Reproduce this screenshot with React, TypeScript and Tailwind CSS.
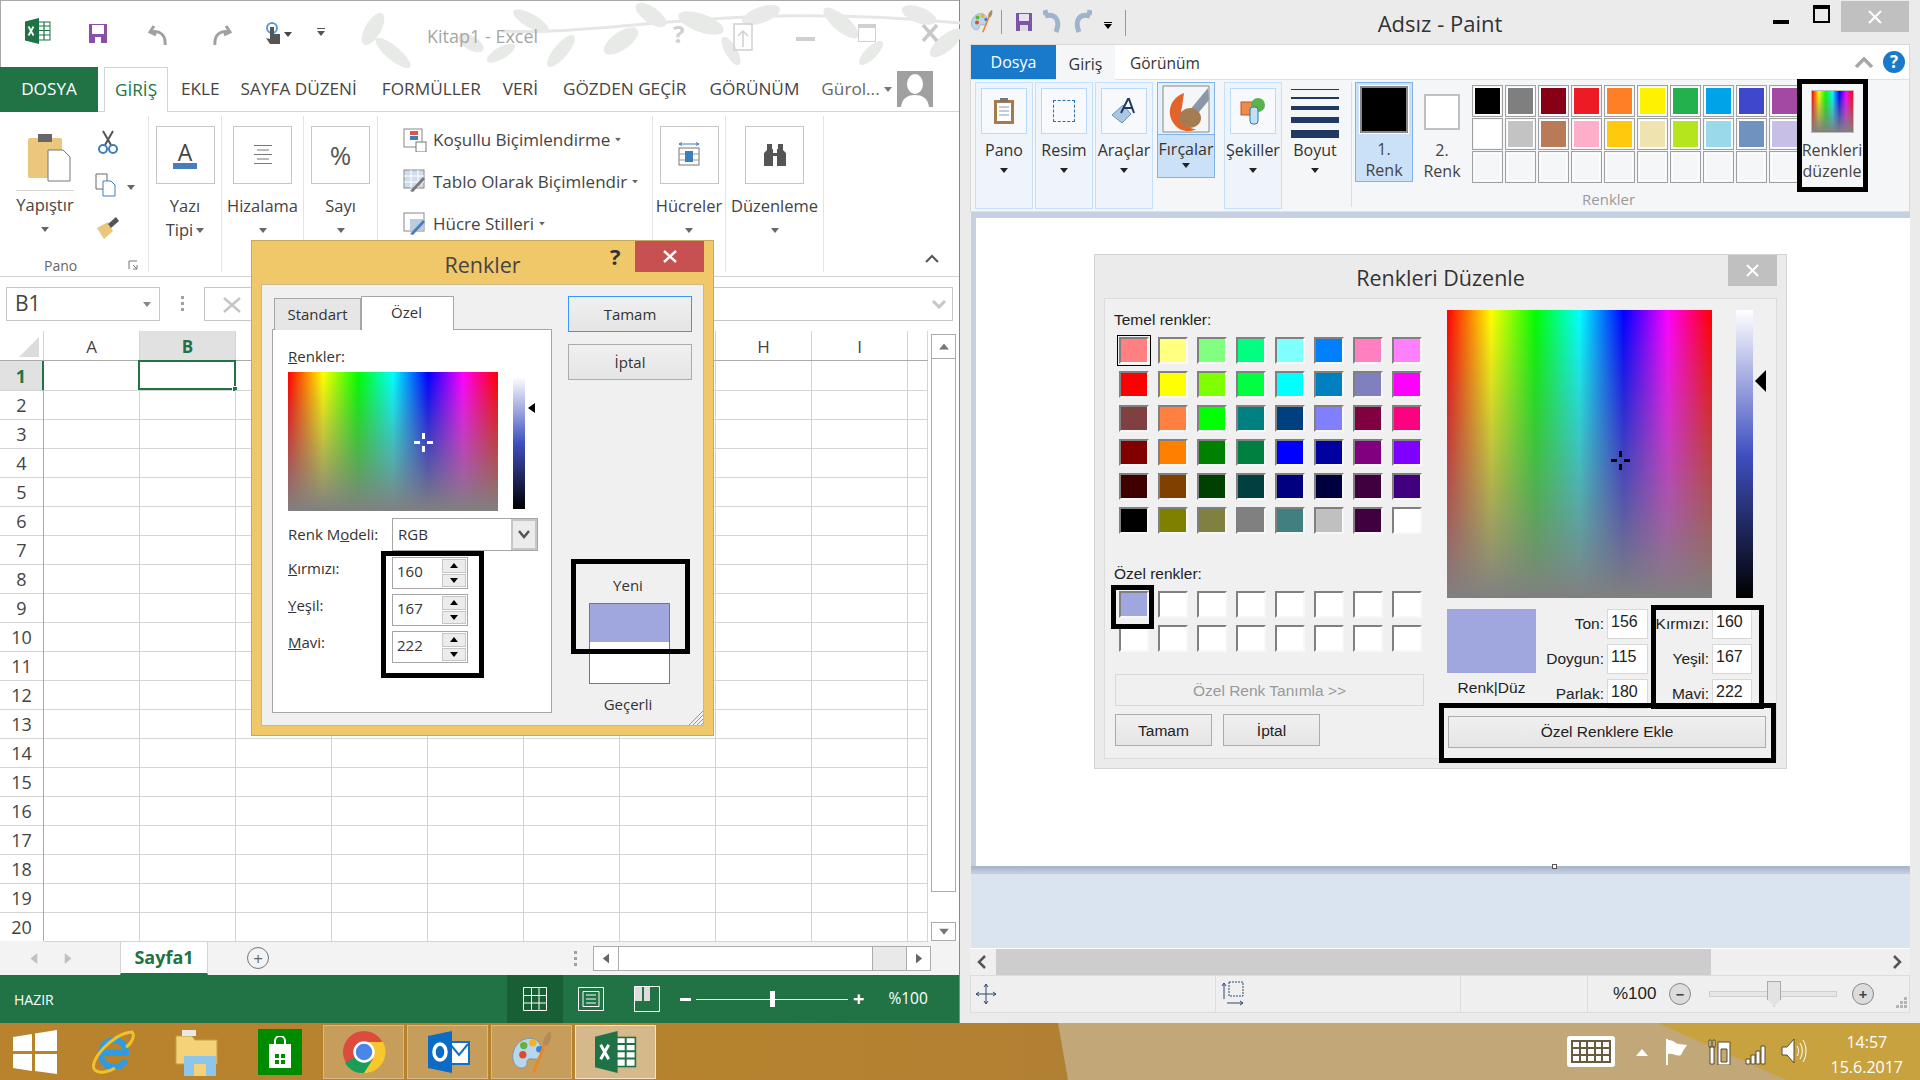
import type { ReactNode } from 'react'

const rows = Array.from({ length: 20 }, (_, i) => i + 1)
const columns = ['A', 'B', 'C', 'D', 'E', 'F', 'G', 'H', 'I', '']

const paletteRows = [
  ['#000000', '#7f7f7f', '#880015', '#ed1c24', '#ff7f27', '#fff200', '#22b14c', '#00a2e8', '#3f48cc', '#a349a4'],
  ['#ffffff', '#c3c3c3', '#b97a57', '#ffaec9', '#ffc90e', '#efe4b0', '#b5e61d', '#99d9ea', '#7092be', '#c8bfe7'],
  ['#f5f6f7', '#f5f6f7', '#f5f6f7', '#f5f6f7', '#f5f6f7', '#f5f6f7', '#f5f6f7', '#f5f6f7', '#f5f6f7', '#f5f6f7'],
]

const basicColors = [
  '#ff8080', '#ffff80', '#80ff80', '#00ff80', '#80ffff', '#0080ff', '#ff80c0', '#ff80ff',
  '#ff0000', '#ffff00', '#80ff00', '#00ff40', '#00ffff', '#0080c0', '#8080c0', '#ff00ff',
  '#804040', '#ff8040', '#00ff00', '#008080', '#004080', '#8080ff', '#800040', '#ff0080',
  '#800000', '#ff8000', '#008000', '#008040', '#0000ff', '#0000a0', '#800080', '#8000ff',
  '#400000', '#804000', '#004000', '#004040', '#000080', '#000040', '#400040', '#400080',
  '#000000', '#808000', '#808040', '#808080', '#408080', '#c0c0c0', '#400040', '#ffffff',
]

const customColors = ['#a0a7de', ...Array.from({ length: 15 }, () => '#ffffff')]

function Caret({ className = '' }: { className?: string }) {
  return (
    <svg width="8" height="5" viewBox="0 0 8 5" className={className}>
      <polygon points="0,0 8,0 4,5" fill="currentColor" />
    </svg>
  )
}

function ExcelIcon({ size = 26 }: { size?: number }) {
  return (
    <svg width={size} height={size} viewBox="0 0 26 26">
      <rect x="9" y="4" width="16" height="18" fill="#fff" stroke="#1f7246" />
      <path d="M13 4v18M19 4v18M9 8h16M9 12.5h16M9 17h16" stroke="#1f7246" strokeWidth="1.2" />
      <polygon points="0,3.500 14,0 14,26 0,22.500" fill="#1f7246" />
      <path d="M3.500 8.500l5 9M8.500 8.500l-5 9" stroke="#fff" strokeWidth="1.800" />
    </svg>
  )
}

function PaintPalette({ size = 24 }: { size?: number }) {
  return (
    <svg width={size} height={size} viewBox="0 0 48 48">
      <path d="M22 9C10 9 2 20 3 31c1 9 9 13 14 9 3-3 0-6 3-8s8 2 12-2c6-7 1-21-10-21z" fill="#b9d6ea" stroke="#6d94b0" />
      <circle cx="14" cy="27" r="4" fill="#e0492f" />
      <circle cx="15" cy="17" r="4" fill="#63b23c" />
      <circle cx="25" cy="14" r="4" fill="#f2b31f" />
      <circle cx="32" cy="21" r="3.500" fill="#3d83cf" />
      <path d="M24 46 37 14l3 1-13 32z" fill="#e8892a" />
      <path d="M36 15c0-5 3-11 8-13 2 5 0 12-4 15z" fill="#b48a5a" />
    </svg>
  )
}

function TitleLeaves() {
  const leaves = [
    [372, 28, 18, 8, -60], [392, 52, 22, 7, 40], [470, 42, 14, 7, 30], [500, 52, 16, 6, -30], [530, 20, 20, 7, 30],
    [560, 50, 20, 7, -50], [620, 40, 20, 9, -35], [650, 14, 18, 8, 35], [700, 22, 24, 9, 20], [730, 50, 16, 6, 60],
    [760, 14, 20, 8, -20], [840, 22, 22, 8, 40], [870, 52, 16, 6, -45], [918, 14, 18, 8, 20], [945, 42, 20, 8, -40],
  ]
  return (
    <svg width="960" height="67" className="absolute left-0 top-0">
      <path d="M500 30C620 35 720 0 960 22" fill="none" stroke="#e5e7e5" strokeWidth="3" />
      {leaves.map(([x, y, rx, ry, a], i) => (
        <ellipse key={i} cx={x} cy={y} rx={rx} ry={ry} transform={`rotate(${a} ${x} ${y})`} fill="#e8eae8" />
      ))}
    </svg>
  )
}

function ExcelTitleBar() {
  return (
    <div className="relative h-[67px] border-t border-l border-[#a8a8a8] text-[#9c9c9c]">
      <TitleLeaves />
      <div className="relative flex h-full items-start pt-[17px]">
        <div className="ml-[24px]"><ExcelIcon /></div>
        <svg width="22" height="22" viewBox="0 0 22 22" className="ml-[36px] mt-[4px]">
          <path d="M2 2h18v19H2z" fill="#8a4fa8" />
          <path d="M5 3h12v9H5z" fill="#fff" />
          <path d="M8 15h6v6H8z" fill="#fff" />
        </svg>
        <svg width="22" height="26" viewBox="0 0 22 26" className="ml-[39px] mt-[5px]" fill="none" stroke="#a0a0a0" strokeWidth="3">
          <path d="M6 3 2 9l6 3M3 9c9-2 15 3 14 13" />
        </svg>
        <svg width="22" height="26" viewBox="0 0 22 26" className="ml-[40px] mt-[5px]" fill="none" stroke="#a0a0a0" strokeWidth="3">
          <path d="M16 3l4 6-6 3M19 9C10 7 4 12 5 22" />
        </svg>
        <svg width="18" height="24" viewBox="0 0 18 24" className="ml-[32px] mt-[4px]">
          <circle cx="8" cy="6" r="5" fill="none" stroke="#5b9bd5" strokeWidth="2" />
          <path d="M6 5h4v7h6v10H6l-4-6 4 1z" fill="#555" />
        </svg>
        <Caret className="ml-[2px] mt-[14px] text-[#444]" />
        <div className="ml-[25px] mt-[10px] h-[1px] w-[8px] bg-[#555]" />
        <Caret className="ml-[-8px] mt-[13px] text-[#555]" />
        <div className="absolute left-[426px] top-[22px] text-[18px] text-[#a6a6a6]">Kitap1 - Excel</div>
        <div className="absolute left-[672px] top-[15px] text-[24px] font-bold text-[#d0d0d0]">?</div>
        <svg width="20" height="28" viewBox="0 0 20 28" className="absolute left-[732px] top-[22px]" fill="none" stroke="#d0d0d0" strokeWidth="1.500">
          <path d="M1 1h18v26H1zM10 24V8M5 13l5-5 5 5" />
        </svg>
        <div className="absolute left-[795px] top-[36px] h-[4px] w-[19px] bg-[#d0d0d0]" />
        <div className="absolute left-[857px] top-[23px] h-[18px] w-[18px] border border-t-[4px] border-[#d0d0d0]" />
        <svg width="18" height="18" viewBox="0 0 18 18" className="absolute left-[920px] top-[23px]" stroke="#c8c8c8" strokeWidth="3.500">
          <path d="M2 1l14 16M16 1 2 17" />
        </svg>
      </div>
    </div>
  )
}

function ExcelTabs() {
  const tabs = [
    ['EKLE', 'ml-[13px]'], ['SAYFA DÜZENİ', 'ml-[21px]'], ['FORMÜLLER', 'ml-[25px]'], ['VERİ', 'ml-[22px]'],
    ['GÖZDEN GEÇİR', 'ml-[25px]'], ['GÖRÜNÜM', 'ml-[23px]'],
  ]
  return (
    <div className="flex h-[45px] items-center border-b border-[#d4d4d4] text-[17.2px] text-[#444]">
      <div className="flex h-[45px] w-[98px] items-center justify-center bg-[#217346] text-white">DOSYA</div>
      <div className="ml-[6px] mt-[1px] flex h-[45px] w-[64px] items-center justify-center border-x border-t border-[#d4d4d4] bg-white text-[#217346]">GİRİŞ</div>
      {tabs.map(([name, margin]) => (
        <div key={name} className={margin}>{name}</div>
      ))}
      <div className="ml-[22px] text-[#666]">Gürol...</div>
      <Caret className="ml-[4px] text-[#777]" />
      <div className="ml-[5px] h-[36px] w-[36px] overflow-hidden bg-[#a0a0a0]">
        <svg width="36" height="36" viewBox="0 0 36 36">
          <ellipse cx="18" cy="13" rx="8" ry="10" fill="#fff" />
          <path d="M4 36c1-9 7-12 14-12s13 3 14 12z" fill="#fff" />
        </svg>
      </div>
    </div>
  )
}

function Collapsed({ label, second, width, children }: { label: string; second?: string; width: number; children: ReactNode }) {
  return (
    <div className="flex h-[156px] shrink-0 flex-col items-center border-r border-[#e3e3e3] pt-[10px]" style={{ width }}>
      <div className="flex h-[58px] w-[59px] items-center justify-center border border-[#c6c6c6]">{children}</div>
      <div className="mt-[10px] whitespace-nowrap leading-[24px]">{label}</div>
      {second ? (
        <div className="flex items-center gap-[3px] leading-[24px]">{second}<Caret className="text-[#666]" /></div>
      ) : (
        <Caret className="mt-[10px] text-[#666]" />
      )}
    </div>
  )
}

function StyleRow({ label, icon, top }: { label: string; icon: ReactNode; top: string }) {
  return (
    <div className={`flex items-center ${top}`}>
      <div className="w-[30px]">{icon}</div>
      <span>{label}</span>
      <Caret className="ml-[4px] scale-75 text-[#666]" />
    </div>
  )
}

function ExcelRibbon() {
  return (
    <div className="flex h-[165px] border-b border-[#d4d4d4] pt-[4px] text-[16.5px] text-[#444]">
      <div className="relative h-[156px] w-[149px] shrink-0 border-r border-[#e3e3e3]">
        <svg width="44" height="50" viewBox="0 0 44 50" className="absolute left-[27px] top-[16px]">
          <rect x="1" y="6" width="34" height="40" rx="2" fill="#eac77c" />
          <path d="M11 2h14v8H11z" fill="#666" />
          <path d="M21 18h15l7 7v24H21z" fill="#fff" stroke="#777" />
        </svg>
        <div className="absolute left-[16px] top-[74px] h-[1px] w-[58px] bg-[#d4d4d4]" />
        <div className="absolute left-[16px] top-[77px] w-[58px] text-center">Yapıştır</div>
        <Caret className="absolute left-[41px] top-[111px] text-[#666]" />
        <svg width="22" height="24" viewBox="0 0 22 24" className="absolute left-[97px] top-[14px]" fill="none">
          <path d="M6 1l8 14M16 1 8 15" stroke="#555" strokeWidth="2" />
          <circle cx="6" cy="19" r="4" stroke="#3d7ebd" strokeWidth="2" />
          <circle cx="16" cy="19" r="4" stroke="#3d7ebd" strokeWidth="2" />
        </svg>
        <svg width="22" height="24" viewBox="0 0 22 24" className="absolute left-[95px] top-[57px]" fill="#fff" stroke="#666">
          <path d="M1 1h11v15H1z" />
          <path d="M8 8h8l4 4v11H8z" stroke="#3d7ebd" />
        </svg>
        <Caret className="absolute left-[127px] top-[69px] text-[#666]" />
        <svg width="24" height="24" viewBox="0 0 24 24" className="absolute left-[96px] top-[100px]">
          <path d="M1 12 12 6l5 9-9 8z" fill="#eac77c" />
          <path d="M12 8 20 1l3 4-8 7z" fill="#555" />
        </svg>
        <div className="absolute left-[44px] top-[139px] text-[14px] text-[#666]">Pano</div>
        <svg width="10" height="10" viewBox="0 0 10 10" className="absolute left-[128px] top-[144px]" fill="none" stroke="#777">
          <path d="M1 9V1h8M5 5l4 4M9 5v4H5" />
        </svg>
      </div>
      <Collapsed label="Yazı" second="Tipi" width={73}>
        <div className="flex w-[24px] flex-col items-center">
          <span className="text-[23px] leading-[20px] text-[#444]">A</span>
          <div className="mt-[1px] h-[6px] w-[24px] bg-[#4a7ebb]" />
        </div>
      </Collapsed>
      <Collapsed label="Hizalama" width={82}>
        <svg width="20" height="22" viewBox="0 0 20 22" stroke="#777">
          <path d="M1 1.500h18M4 6h12M1 10.500h18M4 15h12M1 19.500h18" />
        </svg>
      </Collapsed>
      <Collapsed label="Sayı" width={74}>
        <span className="text-[26px] text-[#555]">%</span>
      </Collapsed>
      <div className="h-[156px] w-[275px] shrink-0 border-r border-[#e3e3e3] pl-[25px] pt-[11px] text-[17px]">
        <StyleRow
          label="Koşullu Biçimlendirme"
          top=""
          icon={
            <svg width="24" height="24" viewBox="0 0 24 24">
              <rect x="1" y="1" width="18" height="18" fill="#fff" stroke="#888" />
              <rect x="7" y="3" width="8" height="4" fill="#d9534f" />
              <rect x="7" y="8" width="8" height="4" fill="#3d7ebd" />
              <rect x="13" y="14" width="10" height="10" fill="#fff" stroke="#777" />
            </svg>
          }
        />
        <StyleRow
          label="Tablo Olarak Biçimlendir"
          top="mt-[16px]"
          icon={
            <svg width="24" height="24" viewBox="0 0 24 24">
              <rect x="1" y="1" width="20" height="18" fill="#cfdcea" stroke="#888" />
              <path d="M8 1v18M15 1v18M1 7h20M1 13h20" stroke="#fff" />
              <path d="M7 22 20 8l2 2L10 23z" fill="#7a7a7a" />
            </svg>
          }
        />
        <StyleRow
          label="Hücre Stilleri"
          top="mt-[17px]"
          icon={
            <svg width="24" height="24" viewBox="0 0 24 24">
              <rect x="1" y="1" width="20" height="18" fill="#fff" stroke="#888" />
              <rect x="7" y="7" width="13" height="11" fill="#b8cde4" />
              <path d="M7 22 20 8l2 2L10 23z" fill="#4a7ebb" />
            </svg>
          }
        />
      </div>
      <Collapsed label="Hücreler" width={73}>
        <svg width="24" height="26" viewBox="0 0 24 26">
          <path d="M2 2h20M2 2l3-1.500M2 2l3 1.500M22 2l-3-1.500M22 2l-3 1.500" stroke="#3d7ebd" fill="none" />
          <rect x="2" y="6" width="20" height="17" fill="#fff" stroke="#777" />
          <path d="M2 12h20M2 18h20" stroke="#999" />
          <rect x="8" y="9" width="8" height="11" fill="#3d7ebd" />
        </svg>
      </Collapsed>
      <Collapsed label="Düzenleme" width={98}>
        <svg width="24" height="22" viewBox="0 0 24 22" fill="#555">
          <path d="M4 0h5v5h1v4h4V5h1V0h5v6l3 3v13h-9V12h-4v10H1V9l3-3z" />
        </svg>
      </Collapsed>
      <svg width="14" height="9" viewBox="0 0 14 9" className="ml-[101px] mt-[138px]" fill="none" stroke="#555" strokeWidth="2">
        <path d="M1 8l6-6 6 6" />
      </svg>
    </div>
  )
}

function FormulaBar() {
  return (
    <div className="flex h-[54px] items-start pl-[6px] pt-[10px] text-[#444]">
      <div className="flex h-[34px] w-[154px] items-center justify-between border border-[#c6c6c6] px-[8px] text-[21px]">
        B1
        <Caret className="text-[#888]" />
      </div>
      <div className="ml-[21px] mt-[9px] flex flex-col gap-[3px]">
        <div className="h-[3px] w-[3px] bg-[#a0a0a0]" />
        <div className="h-[3px] w-[3px] bg-[#a0a0a0]" />
        <div className="h-[3px] w-[3px] bg-[#a0a0a0]" />
      </div>
      <div className="ml-[20px] flex h-[34px] w-[749px] items-center justify-end border border-[#c6c6c6] bg-white pr-[6px]">
        <svg width="14" height="9" viewBox="0 0 14 9" fill="none" stroke="#c6c6c6" strokeWidth="3">
          <path d="M1 1l6 6 6-6" />
        </svg>
      </div>
      <div className="absolute left-[209px] top-[288px] flex h-[34px] w-[46px] items-center justify-center">
        <svg width="18" height="16" viewBox="0 0 18 16" stroke="#c6c6c6" strokeWidth="2.500"><path d="M1 1l16 14M17 1 1 15" /></svg>
      </div>
    </div>
  )
}

function SheetGrid() {
  return (
    <div className="flex h-[610px]">
      <div className="w-[928px] shrink-0 border-r border-[#ababab] text-[#444]">
        <div className="grid h-[30px] grid-cols-[44px_repeat(9,96px)_20px] border-b border-[#ababab]">
          <div className="relative border-r border-[#d4d4d4]">
            <div className="absolute bottom-[3px] right-[4px] h-0 w-0 border-b-[20px] border-l-[20px] border-b-[#dcdcdc] border-l-transparent" />
          </div>
          {columns.map((c) => (
            <div
              key={c}
              className={`flex items-center justify-center border-r border-[#d4d4d4] pt-[3px] text-[17px] ${c === 'B' ? 'bg-[#e1e1e1] font-bold text-[#217346]' : ''}`}
            >
              {c}
            </div>
          ))}
        </div>
        {rows.map((r) => (
          <div key={r} className="grid h-[29px] grid-cols-[44px_repeat(9,96px)_20px]">
            <div
              className={`flex items-center justify-center border-b border-[#d4d4d4] pt-[2px] text-[18px] ${r === 1 ? 'border-r-2 border-r-[#217346] bg-[#e1e1e1] font-bold text-[#217346]' : 'border-r border-r-[#ababab]'}`}
            >
              {r}
            </div>
            {columns.map((c) => (
              <div key={c} className="relative border-b border-r border-[#d4d4d4]">
                {r === 1 && c === 'B' && (
                  <div className="absolute left-[-2px] top-[-1px] h-[30px] w-[98px] border-2 border-[#217346]">
                    <div className="absolute bottom-[-4px] right-[-4px] h-[6px] w-[6px] border border-white bg-[#217346]" />
                  </div>
                )}
              </div>
            ))}
          </div>
        ))}
      </div>
      <div className="ml-[3px] flex w-[25px] flex-col bg-white pt-[3px]">
        <div className="flex h-[25px] items-center justify-center border border-[#ababab]"><Caret className="rotate-180 scale-125 text-[#777]" /></div>
        <div className="h-[532px] border-x border-[#ababab]" />
        <div className="h-[1px] bg-[#ababab]" />
        <div className="mt-[30px] flex h-[19px] items-center justify-center border border-[#ababab]"><Caret className="scale-125 text-[#777]" /></div>
      </div>
    </div>
  )
}

function SheetTabs() {
  return (
    <div className="flex h-[34px] items-center bg-[#f3f3f3]">
      <Caret className="ml-[30px] rotate-90 scale-[1.4] text-[#c0c0c0]" />
      <Caret className="ml-[26px] -rotate-90 scale-[1.4] text-[#c0c0c0]" />
      <div className="ml-[48px] flex h-[34px] w-[88px] items-center justify-center border-b-2 border-x border-[#d4d4d4] border-b-[#217346] bg-white text-[18px] font-bold text-[#217346]">
        Sayfa1
      </div>
      <div className="ml-[39px] flex h-[22px] w-[22px] items-center justify-center rounded-full border-[1.5px] border-[#777] text-[17px] leading-none text-[#666]">+</div>
      <div className="ml-[305px] flex flex-col gap-[3px]">
        <div className="h-[3px] w-[3px] bg-[#a0a0a0]" />
        <div className="h-[3px] w-[3px] bg-[#a0a0a0]" />
        <div className="h-[3px] w-[3px] bg-[#a0a0a0]" />
      </div>
      <div className="ml-[16px] flex h-[25px] w-[338px] border border-[#ababab] bg-[#e9e9e9]">
        <div className="flex w-[24px] items-center justify-center bg-white"><Caret className="rotate-90 scale-125 text-[#666]" /></div>
        <div className="w-[255px] border-x border-[#ababab] bg-white" />
        <div className="flex-1" />
        <div className="flex w-[24px] items-center justify-center border-l border-[#ababab] bg-white"><Caret className="-rotate-90 scale-125 text-[#666]" /></div>
      </div>
    </div>
  )
}

function ExcelStatus() {
  return (
    <div className="flex h-[48px] items-center bg-[#217346] text-[15.5px] text-white">
      <div className="ml-[14px] w-[493px] text-[14px]">HAZIR</div>
      <div className="flex h-[48px] w-[56px] items-center justify-center bg-[#195f36]">
        <svg width="24" height="24" viewBox="0 0 24 24" fill="none" stroke="#fff">
          <path d="M.5.5h23v23H.5zM8.500.5v23M16 .5v23M.5 8.500h23M.5 16h23" />
        </svg>
      </div>
      <svg width="26" height="24" viewBox="0 0 26 24" className="ml-[15px]" fill="none" stroke="#fff">
        <path d="M.5.5h25v23H.5zM5 4.500h16v15H5zM8 8h10M8 12h10M8 16h10" />
      </svg>
      <svg width="26" height="26" viewBox="0 0 26 26" className="ml-[30px]">
        <path d="M.5.5h25v25H.5z" fill="none" stroke="#fff" />
        <path d="M1 1h7v14H1zM10 1h6v14h-6z" fill="#ddd" />
      </svg>
      <div className="ml-[20px] h-[3px] w-[11px] bg-white" />
      <div className="relative ml-[5px] h-[1px] w-[152px] bg-white">
        <div className="absolute left-[74px] top-[-8px] h-[16px] w-[5px] bg-white" />
      </div>
      <div className="ml-[5px] text-[20px] font-bold leading-none">+</div>
      <div className="ml-[24px]">%100</div>
    </div>
  )
}

function ExcelWindow() {
  return (
    <div className="relative flex h-[1023px] w-[960px] shrink-0 flex-col border-r border-[#888] bg-white font-['Open_Sans',sans-serif]">
      <ExcelTitleBar />
      <ExcelTabs />
      <ExcelRibbon />
      <FormulaBar />
      <SheetGrid />
      <SheetTabs />
      <ExcelStatus />
    </div>
  )
}

function Spin({ value }: { value: string }) {
  return (
    <div className="flex h-[32px] w-[76px] items-center border border-[#a6a6a6] bg-white pl-[4px] text-[15px]">
      <span className="flex-1 pb-[4px]">{value}</span>
      <div className="mr-[1px] flex h-[28px] w-[24px] flex-col gap-[1px]">
        <div className="flex flex-1 items-center justify-center border border-[#c6c6c6] bg-[#ececec]"><Caret className="rotate-180 text-black" /></div>
        <div className="flex flex-1 items-center justify-center border border-[#c6c6c6] bg-[#ececec]"><Caret className="text-black" /></div>
      </div>
    </div>
  )
}

function Crosshair({ className }: { className: string }) {
  return (
    <>
      <div className={`absolute left-[-1px] top-[-9px] h-[6px] w-[3px] ${className}`} />
      <div className={`absolute left-[-1px] top-[4px] h-[6px] w-[3px] ${className}`} />
      <div className={`absolute left-[-9px] top-[-1px] h-[3px] w-[6px] ${className}`} />
      <div className={`absolute left-[4px] top-[-1px] h-[3px] w-[6px] ${className}`} />
    </>
  )
}

function RenklerDialog() {
  return (
    <div className="absolute left-[251px] top-[240px] h-[496px] w-[463px] border border-[#c7a85d] bg-[#f0c769] text-[15px] text-[#333] font-['Open_Sans',sans-serif]">
      <div className="relative h-[43px]">
        <div className="pt-[6px] text-center text-[21.5px] leading-[36px] text-[#444]">Renkler</div>
        <div className="absolute left-[358px] top-[0px] text-[22px] font-bold leading-[30px] text-[#333]">?</div>
        <div className="absolute right-[9px] top-0 flex h-[31px] w-[69px] items-center justify-center bg-[#c75050]">
          <svg width="14" height="13" viewBox="0 0 14 13" stroke="#fff" strokeWidth="2.400"><path d="M1 1l12 11M13 1 1 12" /></svg>
        </div>
      </div>
      <div className="relative mx-[9px] flex h-[442px] border border-[#c9b98d] bg-[#f0f0f0] pl-[10px] pt-[11px]">
        <div className="w-[280px]">
          <div className="flex h-[34px] items-end pl-[2px]">
            <div className="flex h-[32px] w-[87px] items-center justify-center border border-b-0 border-[#a6a6a6] bg-[#e6e6e6]">Standart</div>
            <div className="relative z-10 flex h-[34px] w-[93px] items-center justify-center border border-b-0 border-[#a6a6a6] bg-white pb-[2px] pr-[2px]">Özel</div>
          </div>
          <div className="mt-[-1px] h-[384px] border border-[#a6a6a6] bg-white pl-[15px]">
            <div className="h-[42px] pt-[12px] leading-[28px]"><u>R</u>enkler:</div>
            <div className="flex">
              <div className="relative h-[139px] w-[210px] bg-[linear-gradient(to_bottom,rgba(128,128,128,0),#808080),linear-gradient(to_right,#f00,#ff0,#0f0,#0ff,#00f,#f0f,#f00)]">
                <div className="absolute left-[135px] top-[70px]">
                  <Crosshair className="bg-white" />
                </div>
              </div>
              <div className="ml-[15px] mt-[5px] h-[132px] w-[12px] bg-[linear-gradient(to_bottom,#fff,#4050c0_50%,#000)]" />
              <div className="ml-[3px] mt-[31px] h-0 w-0 border-y-[5px] border-r-[7px] border-y-transparent border-r-black" />
            </div>
            <div className="mt-[7px] flex h-[33px] items-center">
              <div className="w-[104px]">Renk M<u>o</u>deli:</div>
              <div className="flex h-[33px] w-[146px] items-center border border-[#a6a6a6] pl-[5px]">
                <span className="flex-1">RGB</span>
                <div className="flex h-[31px] w-[26px] items-center justify-center border-2 border-[#c6c6c6] bg-[#ececec]">
                  <svg width="12" height="9" viewBox="0 0 12 9" fill="none" stroke="#555" strokeWidth="2.500"><path d="M1 1l5 6 5-6" /></svg>
                </div>
              </div>
            </div>
            <div className="mt-[6px] grid grid-cols-[104px_76px] gap-y-[5px]">
              <div className="leading-[22px]"><u>K</u>ırmızı:</div>
              <Spin value="160" />
              <div className="leading-[22px]"><u>Y</u>eşil:</div>
              <Spin value="167" />
              <div className="leading-[22px]"><u>M</u>avi:</div>
              <Spin value="222" />
            </div>
          </div>
        </div>
        <div className="ml-[16px] w-[124px]">
          <div className="flex h-[36px] items-center justify-center border border-[#3399ff] bg-[linear-gradient(to_bottom,#f0f0f0,#e5e5e5)]">Tamam</div>
          <div className="mt-[12px] flex h-[36px] items-center justify-center border border-[#acacac] bg-[linear-gradient(to_bottom,#f0f0f0,#e5e5e5)]">İptal</div>
          <div className="mt-[194px] h-[22px] pr-[4px] text-center leading-[22px]">Yeni</div>
          <div className="ml-[21px] mt-[7px] h-[81px] w-[81px] border border-[#777] bg-white">
            <div className="h-[38px] bg-[#a0a7de]" />
          </div>
          <div className="mt-[9px] h-[22px] pr-[4px] text-center leading-[22px]">Geçerli</div>
        </div>
        <svg width="14" height="14" viewBox="0 0 14 14" className="absolute bottom-0 right-0" stroke="#999">
          <path d="M14 0 0 14M14 4 4 14M14 8l-6 6M14 12l-2 2" />
        </svg>
      </div>
    </div>
  )
}

function PaintTool({ label, children }: { label: string; children: ReactNode }) {
  return (
    <div className="flex h-[127px] w-[58px] flex-col items-center border border-[#c5e0fb] bg-[#eff4fa]">
      <div className="mt-[5px] flex h-[46px] w-[46px] items-center justify-center border border-[#b9dbfa] bg-[#f7f9fc]">{children}</div>
      <div className="mt-[5px] leading-[22px]">{label}</div>
      <Caret className="mt-[7px] text-[#222]" />
    </div>
  )
}

function PaintTitle() {
  return (
    <div className="relative flex h-[44px] items-start pl-[10px] pt-[9px]">
      <PaintPalette />
      <div className="ml-[7px] mt-[1px] h-[24px] w-[1px] bg-[#999]" />
      <svg width="18" height="20" viewBox="0 0 18 20" className="ml-[13px] mt-[3px]">
        <path d="M1 1h16v18H1z" fill="#7c55a8" />
        <path d="M4 2h10v7H4z" fill="#e8e2f2" />
        <path d="M5 13h8v6H5z" fill="#ddd" />
      </svg>
      <svg width="20" height="28" viewBox="0 0 20 28" className="ml-[10px]" fill="none" stroke="#9fb3cc" strokeWidth="5">
        <path d="M3 6 2 1M2 7c10-3 16 4 11 16" />
      </svg>
      <svg width="20" height="28" viewBox="0 0 20 28" className="ml-[9px]" fill="none" stroke="#9fb3cc" strokeWidth="5">
        <path d="M17 6l1-5M18 7C8 4 2 11 7 23" />
      </svg>
      <div className="ml-[12px] mt-[13px] h-[1px] w-[8px] bg-black" />
      <Caret className="ml-[-8px] mt-[15px] text-black" />
      <div className="ml-[13px] mt-[1px] h-[26px] w-[1px] bg-[#999]" />
      <div className="absolute inset-x-0 top-[7px] text-center text-[22px] leading-[32px] text-[#333]">Adsız - Paint</div>
      <div className="absolute left-[813px] top-[20px] h-[4px] w-[16px] bg-black" />
      <div className="absolute left-[853px] top-[5px] h-[18px] w-[17px] border-2 border-t-[4px] border-black" />
      <div className="absolute left-[881px] top-[1px] flex h-[31px] w-[68px] items-center justify-center bg-[#c0c0c0]">
        <svg width="14" height="14" viewBox="0 0 14 14" stroke="#fff" strokeWidth="2"><path d="M1 1l12 12M13 1 1 13" /></svg>
      </div>
    </div>
  )
}

function PaintRibbon() {
  return (
    <div className="mx-[10px] border-x border-t border-[#d8d8d8] bg-white">
      <div className="flex h-[34px] items-center text-[16px] text-[#333]">
        <div className="flex h-[34px] w-[85px] items-center justify-center bg-[#1979ca] text-white">Dosya</div>
        <div className="flex h-[35px] w-[59px] items-center justify-center bg-[#f5f6f7] pt-[3px]">Giriş</div>
        <div className="ml-[15px] pt-[3px] text-[15.5px]">Görünüm</div>
        <svg width="18" height="12" viewBox="0 0 18 12" className="ml-[auto]" fill="none" stroke="#a8a8a8" strokeWidth="3.500"><path d="M1 11l8-8 8 8" /></svg>
        <div className="ml-[10px] mr-[4px] flex h-[22px] w-[22px] items-center justify-center rounded-full bg-[#1979ca] text-[17px] font-bold text-white">?</div>
      </div>
      <div className="flex h-[133px] border-y border-[#e0e0e0] bg-[#f5f6f7] pl-[4px] pt-[2px] text-[16px] text-[#333]">
        <div className="flex gap-[2px]">
          <PaintTool label="Pano">
            <svg width="22" height="28" viewBox="0 0 22 28">
              <rect x="1" y="3" width="20" height="24" fill="#a47a4e" />
              <rect x="4" y="6" width="14" height="18" fill="#fff" />
              <path d="M6 10h10M6 14h10M6 18h10" stroke="#89a" />
              <rect x="7" y="1" width="8" height="4" fill="#777" />
            </svg>
          </PaintTool>
          <PaintTool label="Resim">
            <div className="h-[22px] w-[22px] border border-dashed border-[#2a6fb0]" />
          </PaintTool>
          <PaintTool label="Araçlar">
            <svg width="26" height="28" viewBox="0 0 26 28">
              <path d="M1 18 12 8l8 9-9 9z" fill="#aac8e6" stroke="#6d94b0" />
              <path d="M10 16 17 2h1l5 14M13 11h8" fill="none" stroke="#1f3864" strokeWidth="2" />
            </svg>
          </PaintTool>
        </div>
        <div className="ml-[4px] flex h-[96px] w-[58px] flex-col items-center border border-[#7eb4ea] bg-[#cbe1f7]">
          <div className="flex h-[52px] w-[56px] items-center justify-center border-b border-[#7eb4ea] bg-[#e6f0fa]">
            <svg width="48" height="48" viewBox="0 0 48 48">
              <path d="M1 1h46v46H1z" fill="#f4f6f8" stroke="#888" />
              <path d="M46 3 27 26l6 6 14-17z" fill="#8a97a8" />
              <path d="M22 8C6 14 3 32 16 43c6 4 14 4 18 1-10 0-18-10-14-22z" fill="#e2642a" />
              <ellipse cx="28" cy="33" rx="11" ry="10" fill="#a57c52" />
            </svg>
          </div>
          <div className="mt-[2px] leading-[24px]">Fırçalar</div>
          <Caret className="mt-[2px] text-[#222]" />
        </div>
        <div className="ml-[9px]">
          <PaintTool label="Şekiller">
            <svg width="26" height="30" viewBox="0 0 26 30">
              <rect x="1" y="6" width="13" height="13" fill="#ee8a4a" stroke="#b65a20" />
              <circle cx="18" cy="9" r="7" fill="#58b24d" />
              <rect x="10" y="11" width="8" height="17" rx="3" fill="#bfe0f5" stroke="#36759f" />
            </svg>
          </PaintTool>
        </div>
        <div className="ml-[8px] flex w-[50px] flex-col items-center">
          <div className="flex h-[56px] w-[48px] flex-col justify-between pt-[7px]">
            <div className="h-[1px] bg-[#1f3864]" />
            <div className="h-[2px] bg-[#1f3864]" />
            <div className="h-[4px] bg-[#1f3864]" />
            <div className="h-[6px] bg-[#1f3864]" />
            <div className="h-[8px] bg-[#1f3864]" />
          </div>
          <div className="mt-[1px] leading-[22px]">Boyut</div>
          <Caret className="mt-[7px] text-[#222]" />
        </div>
        <div className="ml-[11px] h-[125px] w-[1px] bg-[#dcdcdc]" />
        <div className="ml-[3px] flex h-[100px] w-[58px] flex-col items-center border border-[#7eb4ea] bg-[#cbe1f7]">
          <div className="mt-[3px] h-[47px] w-[48px] border-2 border-[#888] bg-black outline outline-1 outline-[#fff]" />
          <div className="mt-[5px] leading-[22px] text-[#444]">1.</div>
          <div className="leading-[20px] text-[#444]">Renk</div>
        </div>
        <div className="ml-[10px] flex w-[38px] flex-col items-center">
          <div className="mt-[12px] h-[36px] w-[36px] border-2 border-[#c0c0c0] bg-white" />
          <div className="mt-[9px] leading-[22px] text-[#444]">2.</div>
          <div className="leading-[20px] text-[#444]">Renk</div>
        </div>
        <div className="ml-[11px] w-[326px] shrink-0">
          <div className="grid grid-cols-[repeat(10,31px)] gap-x-[2px] gap-y-[1px] pt-[3px]">
            {paletteRows.flat().map((color, i) => (
              <div key={i} className="h-[32px] border border-[#a0a0a0] p-[1px]">
                <div className="h-full border border-white" style={{ backgroundColor: color }} />
              </div>
            ))}
          </div>
          <div className="ml-[110px] mt-[5px] text-[15px] text-[#9a9a9a]">Renkler</div>
        </div>
        <div className="relative z-10 flex w-[68px] shrink-0 flex-col items-center">
          <div className="mt-[8px] h-[43px] w-[43px] border border-[#bbb] bg-[linear-gradient(to_bottom,rgba(128,128,128,0),#808080),linear-gradient(to_right,#f00,#ff0,#0f0,#0ff,#00f,#f0f,#f00)]" />
          <div className="mt-[6px] leading-[22px] text-[#444]">Renkleri</div>
          <div className="leading-[20px] text-[#444]">düzenle</div>
        </div>
      </div>
    </div>
  )
}

function PaintStatus() {
  return (
    <div className="relative mx-[10px] flex h-[38px] items-center border border-[#dcdcdc] bg-[#efefef] text-[#333]">
      <div className="flex h-full w-[245px] items-center border-r border-[#dcdcdc] pl-[5px]">
        <svg width="20" height="20" viewBox="0 0 20 20" fill="none" stroke="#2a4a70"><path d="M10 0v20M0 10h20M10 0 8 3M10 0l2 3M10 20l-2-3M10 20l2-3M0 10l3-2M0 10l3 2M20 10l-3-2M20 10l-3 2" /></svg>
      </div>
      <div className="flex h-full w-[245px] items-center border-r border-[#dcdcdc] pl-[5px]">
        <svg width="24" height="26" viewBox="0 0 24 26" fill="none" stroke="#2a4a70"><path d="M8 1h14v14H8z" strokeDasharray="2 1" /><path d="M3 2v16M1 5l2-3 2 3M6 22h16M19 20l3 2-3 2" /></svg>
      </div>
      <div className="h-full w-[127px] border-r border-[#dcdcdc]" />
      <div className="ml-[25px] w-[45px] whitespace-nowrap text-[17px] font-['Liberation_Sans',sans-serif] text-[#222]">%100</div>
      <div className="ml-[11px] flex h-[22px] w-[22px] items-center justify-center rounded-full border border-[#888] bg-[#dcdcdc] text-[15px] font-bold leading-none text-[#444]">−</div>
      <div className="relative ml-[18px] h-[6px] w-[128px] border border-[#cfcfcf] bg-[#e6e6e6]">
        <div className="absolute left-[57px] top-[-11px] h-[26px] w-[14px] border border-[#aaa] bg-[#e3e3e3] [clip-path:polygon(0_0,100%_0,100%_70%,50%_100%,0_70%)]" />
      </div>
      <div className="ml-[15px] flex h-[22px] w-[22px] items-center justify-center rounded-full border border-[#888] bg-[#dcdcdc] text-[15px] font-bold leading-none text-[#444]">+</div>
      <svg width="12" height="12" viewBox="0 0 12 12" className="absolute bottom-[3px] right-[1px]" fill="#b4b4b4">
        <path d="M8 0h3v3H8zM4 4h3v3H4zM8 4h3v3H8zM0 8h3v3H0zM4 8h3v3H4zM8 8h3v3H8z" />
      </svg>
    </div>
  )
}

function PaintWindow() {
  return (
    <div className="flex h-[1023px] w-[960px] shrink-0 flex-col bg-[#ebebeb] font-['Open_Sans',sans-serif]">
      <PaintTitle />
      <PaintRibbon />
      <div className="ml-[11px] mr-[10px] flex h-[736px] flex-col">
        <div className="h-[6px] bg-[#c5d0e2]" />
        <div className="flex h-[648px]">
          <div className="w-[5px] bg-[#c5d0e2]" />
          <div className="flex-1 bg-white" />
        </div>
        <div className="relative h-[8px] bg-[linear-gradient(to_bottom,#a6b3c9,#c5d0e2)]">
          <div className="absolute left-[581px] top-[-2px] h-[5px] w-[5px] border border-[#555] bg-white" />
        </div>
        <div className="flex-1 bg-[#dae4f1]" />
      </div>
      <div className="mx-[10px] flex h-[27px] items-center border-t border-white bg-[#efefef]">
        <svg width="10" height="14" viewBox="0 0 10 14" className="ml-[7px]" fill="none" stroke="#555" strokeWidth="2.500"><path d="M8 1 2 7l6 6" /></svg>
        <div className="ml-[9px] h-full w-[715px] bg-[#cdcdcd]" />
        <svg width="10" height="14" viewBox="0 0 10 14" className="ml-auto mr-[8px]" fill="none" stroke="#555" strokeWidth="2.500"><path d="M2 1l6 6-6 6" /></svg>
      </div>
      <PaintStatus />
    </div>
  )
}

function BasicSwatch({ color, picked }: { color: string; picked?: boolean }) {
  return (
    <div
      className={`h-[27px] w-[30px] border-2 border-b-[#f8f8f8] border-l-[#808080] border-r-[#f8f8f8] border-t-[#808080] ${picked ? 'outline outline-1 outline-offset-1 outline-black' : ''}`}
      style={{ backgroundColor: color }}
    />
  )
}

function Field({ label, value }: { label: string; value: string }) {
  return (
    <>
      <div className="text-right leading-[30px]">{label}</div>
      <div className="h-[30px] border border-[#d8d8d8] bg-white pl-[3px] text-[16px] leading-[24px]">{value}</div>
    </>
  )
}

function EditColorsDialog() {
  return (
    <div className="absolute left-[1094px] top-[254px] h-[515px] w-[693px] border border-[#d4d4d4] bg-[#ebebeb] text-[15.5px] text-[#222] font-['Liberation_Sans',sans-serif]">
      <div className="relative h-[43px] text-center text-[21.5px] leading-[46px] font-['Open_Sans',sans-serif] text-[#333]">
        Renkleri Düzenle
        <div className="absolute right-[9px] top-0 flex h-[31px] w-[49px] items-center justify-center bg-[#c0c0c0]">
          <svg width="13" height="13" viewBox="0 0 13 13" stroke="#fff" strokeWidth="2"><path d="M1 1l11 11M12 1 1 12" /></svg>
        </div>
      </div>
      <div className="mx-[9px] flex h-[461px] border border-[#dcdcdc] bg-[#f0f0f0]">
        <div className="w-[342px] shrink-0 pl-[9px]">
          <div className="h-[38px] pt-[9px] leading-[24px]">Temel renkler:</div>
          <div className="ml-[5px] grid grid-cols-[repeat(8,30px)] gap-x-[9px] gap-y-[7px]">
            {basicColors.map((color, i) => (
              <BasicSwatch key={i} color={color} picked={i === 0} />
            ))}
          </div>
          <div className="mt-[28px] h-[22px] leading-[24px]">Özel renkler:</div>
          <div className="ml-[5px] mt-[7px] grid grid-cols-[repeat(8,30px)] gap-x-[9px] gap-y-[7px]">
            {customColors.map((color, i) => (
              <BasicSwatch key={i} color={color} />
            ))}
          </div>
          <div className="ml-[1px] mt-[22px] flex h-[32px] w-[309px] items-center justify-center border border-[#d8d8d8] pt-[1px] text-[#999]">Özel Renk Tanımla &gt;&gt;</div>
          <div className="ml-[1px] mt-[8px] flex gap-[11px]">
            <div className="flex h-[32px] w-[97px] items-center justify-center border border-[#acacac] bg-[linear-gradient(to_bottom,#f0f0f0,#e5e5e5)] pt-[1px]">Tamam</div>
            <div className="flex h-[32px] w-[97px] items-center justify-center border border-[#acacac] bg-[linear-gradient(to_bottom,#f0f0f0,#e5e5e5)] pt-[1px]">İptal</div>
          </div>
        </div>
        <div className="pt-[11px]">
          <div className="flex">
            <div className="relative h-[288px] w-[265px] bg-[linear-gradient(to_bottom,rgba(128,128,128,0),#808080),linear-gradient(to_right,#f00,#ff0,#0f0,#0ff,#00f,#f0f,#f00)]">
              <div className="absolute left-[173px] top-[150px]">
                <Crosshair className="bg-black" />
              </div>
            </div>
            <div className="ml-[24px] h-[288px] w-[17px] bg-[linear-gradient(to_bottom,#fff,#4050c0_50%,#000)]" />
            <div className="ml-[2px] mt-[60px] h-0 w-0 border-y-[11px] border-r-[11px] border-y-transparent border-r-black" />
          </div>
          <div className="mt-[11px] flex">
            <div className="w-[89px]">
              <div className="h-[64px] bg-[#a0a7de]" />
              <div className="mt-[4px] text-center leading-[22px]">Renk|Düz</div>
            </div>
            <div className="grid grid-cols-[68px_41px_58px_40px] grid-rows-[30px_30px_30px] gap-x-[3px] gap-y-[5px]">
              <Field label="Ton:" value="156" />
              <Field label="Kırmızı:" value="160" />
              <Field label="Doygun:" value="115" />
              <Field label="Yeşil:" value="167" />
              <Field label="Parlak:" value="180" />
              <Field label="Mavi:" value="222" />
            </div>
          </div>
          <div className="ml-[1px] mt-[7px] flex h-[32px] w-[318px] items-center justify-center border border-[#acacac] bg-[linear-gradient(to_bottom,#f0f0f0,#e5e5e5)]">Özel Renklere Ekle</div>
        </div>
      </div>
    </div>
  )
}

function Taskbar() {
  const group = 'flex h-[54px] w-[81px] items-center justify-center border border-[#d8b98a] bg-[#c79d5c]'
  return (
    <div className="relative flex h-[57px] items-center bg-[linear-gradient(to_right,#b9832d,#b5822f_40%,#a57c3d)]">
      <svg width="1920" height="57" className="absolute left-0 top-0">
        <polygon points="1058,0 1920,0 1920,57 1068,57" fill="#c2a778" />
        <polygon points="1658,0 1920,0 1920,57 1787,57" fill="#c8a23e" />
      </svg>
      <div className="relative flex h-full items-center">
        <svg width="44" height="44" viewBox="0 0 44 44" className="ml-[13px]" fill="#fff">
          <path d="M0 7l19-3v17H0zM22 3.500 44 0v21H22zM0 24h19v17L0 38zM22 24h22v20l-22-3z" />
        </svg>
        <svg width="46" height="46" viewBox="0 0 46 46" className="ml-[33px]">
          <path d="M12 24h24c0-8-5-13-12-13S11 17 11 25s6 13 13 13c6 0 10-3 12-7" fill="none" stroke="#2f9be0" strokeWidth="6" />
          <path d="M5 41C-3 34 22 4 42 3c4 4-2 13-6 15M5 41c4 4 14 2 20-2" fill="none" stroke="#f2c02a" strokeWidth="3" />
        </svg>
        <svg width="46" height="48" viewBox="0 0 46 48" className="ml-[38px]">
          <path d="M2 8h16l3 4h22v24H2z" fill="#f3d27a" stroke="#c89f45" />
          <path d="M8 2h14v6H8z" fill="#e8e8e8" />
          <rect x="10" y="28" width="32" height="20" fill="#8ec5ea" />
          <path d="M20 48V36h12v12z" fill="#f3d27a" />
        </svg>
        <div className="ml-[38px] flex h-[46px] w-[44px] items-center justify-center bg-[#008a00]">
          <svg width="24" height="32" viewBox="0 0 24 32">
            <path d="M1 8h22v24H1z" fill="#fff" />
            <path d="M7 10V5a5 5 0 0 1 10 0v5" fill="none" stroke="#fff" strokeWidth="2" />
            <path d="M7 18h4v4H7zM13 18h4v4h-4zM7 24h4v4H7zM13 24h4v4h-4z" fill="#008a00" />
          </svg>
        </div>
        <div className="ml-[21px] flex gap-[3px]">
          <div className={group}>
            <svg width="44" height="44" viewBox="0 0 44 44">
              <circle cx="22" cy="22" r="21" fill="#dd4b3e" />
              <path d="M22 22 3 33a21 21 0 0 0 19 10c5 0 9-2 13-4z" fill="#1a9d58" />
              <path d="M22 12h19a21 21 0 0 1-19 31l9-14z" fill="#f8c72e" />
              <circle cx="22" cy="22" r="9.500" fill="#4a86e8" stroke="#fff" strokeWidth="2.500" />
            </svg>
          </div>
          <div className={group}>
            <svg width="44" height="44" viewBox="0 0 44 44">
              <path d="M22 12h21v22H22z" fill="#fff" stroke="#1072c6" strokeWidth="2" />
              <path d="M24 14l9 11 9-11" fill="none" stroke="#1072c6" strokeWidth="2" />
              <polygon points="2,6 26,1 26,43 2,38" fill="#0a6cc4" />
              <ellipse cx="14" cy="22" rx="6" ry="8" fill="none" stroke="#fff" strokeWidth="3.500" />
            </svg>
          </div>
          <div className={group}><PaintPalette size={44} /></div>
          <div className="flex h-[54px] w-[81px] items-center justify-center border border-[#f4e6cc] bg-[#d6b98a]"><ExcelIcon size={42} /></div>
        </div>
      </div>
      <div className="absolute left-[1567px] top-[13px] flex h-[31px] w-[48px] items-center justify-center rounded-[3px] bg-white">
        <div className="grid h-[23px] w-[40px] grid-cols-[repeat(5,1fr)] gap-[2px] bg-[#6b5a3c] p-[2px]">
          {Array.from({ length: 15 }, (_, i) => (
            <div key={i} className="bg-white" />
          ))}
        </div>
      </div>
      <div className="absolute left-[1636px] top-[26px] h-0 w-0 border-x-[6px] border-b-[7px] border-x-transparent border-b-white" />
      <svg width="24" height="26" viewBox="0 0 24 26" className="absolute left-[1665px] top-[16px]" fill="#fff">
        <path d="M1 0h2v26H1zM3 1c7 0 7 4 11 4l8 1-4 6-2 4c-5 2-7-2-13-1z" />
      </svg>
      <svg width="24" height="26" viewBox="0 0 24 26" className="absolute left-[1708px] top-[16px]" fill="#fff" stroke="#5b4a2a">
        <path d="M1 1h2v7H1zM5 1h2v7H5zM2 8h4v17H2z" />
        <path d="M10 3h12v23H10z" />
        <path d="M13 10h6v13h-6z" fill="#c2a778" />
      </svg>
      <svg width="22" height="20" viewBox="0 0 22 20" className="absolute left-[1745px] top-[22px]" fill="#fff" stroke="#5b4a2a">
        <path d="M1 14h4v5H1zM6 10h4v9H6zM11 6h4v13h-4zM16 1h4v18h-4z" />
      </svg>
      <svg width="26" height="28" viewBox="0 0 26 28" className="absolute left-[1781px] top-[14px]">
        <path d="M1 10h5l7-8v24l-7-8H1z" fill="#fff" stroke="#5b4a2a" />
        <path d="M16 9c2 3 2 7 0 10M19 6c3 5 3 11 0 16M22 3c4 6 4 16 0 22" fill="none" stroke="#fff" />
      </svg>
      <div className="absolute right-[17px] top-[7px] text-center text-[16px] leading-[25px] text-white font-['Open_Sans',sans-serif]">
        <div>14:57</div>
        <div>15.6.2017</div>
      </div>
    </div>
  )
}

function Mark({ className }: { className: string }) {
  return <div className={`absolute border-[5px] border-black ${className}`} />
}

export default function App() {
  return (
    <div className="relative h-[1080px] w-[1920px] overflow-hidden">
      <div className="flex">
        <ExcelWindow />
        <PaintWindow />
      </div>
      <Taskbar />
      <RenklerDialog />
      <EditColorsDialog />
      <Mark className="left-[381px] top-[551px] h-[127px] w-[103px]" />
      <Mark className="left-[571px] top-[559px] h-[95px] w-[119px]" />
      <Mark className="left-[1797px] top-[79px] h-[113px] w-[71px]" />
      <Mark className="left-[1111px] top-[585px] h-[44px] w-[43px]" />
      <Mark className="left-[1651px] top-[605px] h-[104px] w-[113px]" />
      <Mark className="left-[1439px] top-[703px] h-[60px] w-[337px]" />
    </div>
  )
}
